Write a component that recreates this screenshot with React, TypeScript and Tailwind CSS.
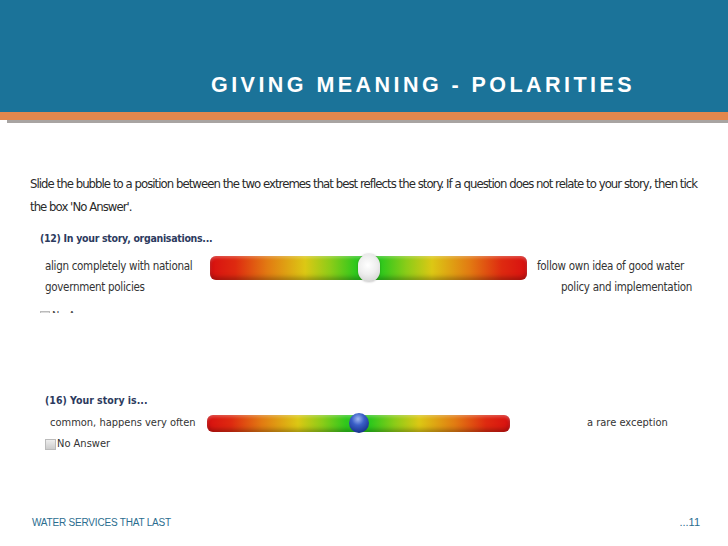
import React from 'react';

const BAR =
  "bg-[linear-gradient(to_right,#d81010_0%,#de2a10_8%,#e27a12_18%,#dcc814_30%,#8ccc18_38%,#2ec81c_46%,#2ec81c_54%,#8ccc18_62%,#dcc814_70%,#e27a12_82%,#de2a10_92%,#d81010_100%)]";

const CondFont = "font-['DejaVu_Sans_Condensed','Liberation_Sans',sans-serif]";

function Slider({ height, knob }: { height: string; knob: 'white' | 'blue' }) {
  return (
    <div className={`relative flex items-center justify-center rounded-[6px] ${height} ${BAR} shadow-[inset_0_-3px_4px_rgba(0,0,0,0.25),inset_0_2px_3px_rgba(255,255,255,0.25)]`}>
      {knob === 'white' ? (
        <div className="h-[28px] w-[22px] rounded-full bg-[radial-gradient(circle_at_45%_40%,#ffffff_0%,#eeeeee_45%,#c8c8c8_100%)] shadow-[0_0_2px_rgba(0,0,0,0.3)]" />
      ) : (
        <div className="h-[20px] w-[20px] rounded-full bg-[radial-gradient(circle_at_45%_30%,#9fb8f0_0%,#3a5fc8_35%,#1a3690_75%,#0e2060_100%)]" />
      )}
    </div>
  );
}

export default function App() {
  return (
    <div className="flex h-[546px] w-[728px] flex-col overflow-hidden bg-white font-['Liberation_Sans',Arial,sans-serif]">
      <header className="flex h-[112px] items-end bg-[#1b7399] pb-[16px] pl-[211px]">
        <h1 className="whitespace-nowrap text-[21.5px] font-bold leading-none tracking-[3.45px] text-white">GIVING MEANING - POLARITIES</h1>
      </header>
      <div className="h-[8px] bg-[#e2874d]" />
      <div className="ml-[7px] h-[3px] bg-[#a8a4a2]" />

      <main className="flex flex-1 flex-col">
        <p className={`mt-[49px] whitespace-nowrap pl-[30px] text-[13px] leading-[23px] tracking-[-0.95px] text-[#2a2a2a] ${CondFont}`}>
          Slide the bubble to a position between the two extremes that best reflects the story. If a question does not relate to your story, then tick
          <br />
          the box 'No Answer'.
        </p>

        {/* question 12, cropped at the bottom */}
        <section className="mt-[12px] flex h-[83px] flex-col overflow-hidden pl-[40px]">
          <h2 className={`whitespace-nowrap text-[10.5px] font-bold leading-[16px] tracking-[-0.3px] text-[#2c3a5e] ${CondFont}`}>
            (12) In your story, organisations...
          </h2>
          <div className={`mt-[10px] flex whitespace-nowrap text-[11.5px] leading-[21px] tracking-[-0.3px] text-[#333] ${CondFont}`}>
            <div className="w-[170px] pl-[5px]">
              align completely with national
              <br />
              government policies
            </div>
            <div className="w-[317px]">
              <Slider height="h-[24px]" knob="white" />
            </div>
            <div className="w-[165px] pl-[10px] text-right">
              <span className="block text-left">follow own idea of good water</span>
              policy and implementation
            </div>
          </div>
          <div className={`mt-[10px] flex items-center gap-[2px] text-[11px] text-[#444] ${CondFont}`}>
            <span className="h-[10px] w-[10px] border border-[#bbb] bg-[#ddd]" />
            No Answer
          </div>
        </section>

        {/* question 16 */}
        <section className="mt-[80px] flex flex-col pl-[45px]">
          <h2 className={`text-[10.5px] font-bold leading-[14px] text-[#2c3a5e] ${CondFont}`}>(16) Your story is...</h2>
          <div className={`mt-[7px] flex items-center text-[11px] leading-[18px] text-[#333] ${CondFont}`}>
            <div className="w-[162px] pl-[5px]">common, happens very often</div>
            <div className="w-[303px]">
              <Slider height="h-[17px]" knob="blue" />
            </div>
            <div className="pl-[77px]">a rare exception</div>
          </div>
          <div className={`mt-[4px] flex items-center gap-[1px] text-[11px] text-[#333] ${CondFont}`}>
            <span className="h-[11px] w-[11px] border border-[#bbb] bg-[linear-gradient(#eee,#ccc)]" />
            No Answer
          </div>
        </section>

        <footer className="mt-auto mb-[16px] flex items-end justify-between pl-[32px] pr-[28px]">
          <span className="text-[10px] tracking-[-0.2px] text-[#2b6d8f]">WATER SERVICES THAT LAST</span>
          <span className="text-[11px] text-[#2b6d8f]">...11</span>
        </footer>
      </main>
    </div>
  );
}
